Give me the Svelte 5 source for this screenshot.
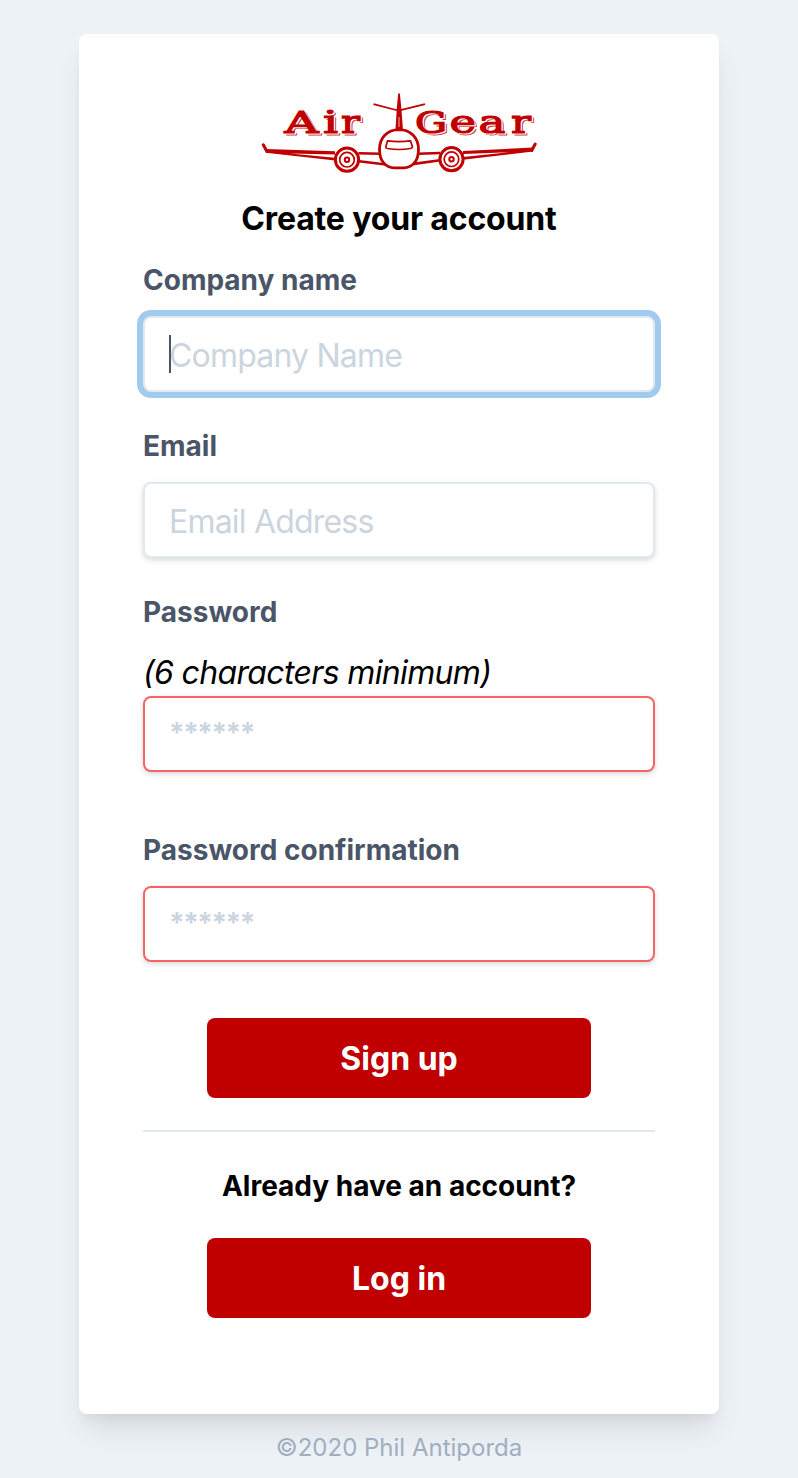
<script>
  let company = $state('');
  let email = $state('');
  let password = $state('');
  let confirmation = $state('');

  const letters = [
    { char: 'A', x: 284.5, width: 34, size: 30.5 },
    { char: 'i', x: 323, width: 15, size: 32.5 },
    { char: 'r', x: 341, width: 19, size: 32.5 },
    { char: 'G', x: 415, width: 32, size: 30.5 },
    { char: 'e', x: 449.5, width: 26.5, size: 32.5 },
    { char: 'a', x: 478.5, width: 27, size: 32.5 },
    { char: 'r', x: 511, width: 20, size: 32.5 }
  ];
  const layers = [
    { name: 'echo', dx: 2.4, dy: 2 },
    { name: 'gap', dx: 1.2, dy: 0.9 },
    { name: 'face', dx: 0, dy: 0 }
  ];
</script>

<main class="page">
  <form class="card" onsubmit={(e) => e.preventDefault()}>
    <svg class="logo" viewBox="259 88 280 90" width="280" height="90" role="img" aria-label="Air Gear">
      {#each layers as layer}
        <g class="lettering {layer.name}">
          {#each letters as l}
            <text x={l.x + layer.dx} y={133.2 + layer.dy} font-size={l.size} textLength={l.width} lengthAdjust="spacingAndGlyphs">{l.char}</text>
          {/each}
        </g>
      {/each}
      <g class="plane">
        <path class="solid" d="M398.200 93.500h1.700l1.500 16 1.500 19.500h-7.400l1.200-19.500z" />
        <path d="M373.500 104.200l24.500 6.300M425 104.200l-24.500 6" stroke-width="1.800" />
        <path d="M399 117v10" stroke="#fff" stroke-width=".7" />
        <path d="M263.300 144.800l3.600 6.700M535.200 144l-3.400 6.500" stroke-width="3" stroke-linecap="round" />
        <path class="solid" d="M266 149l69 2.200v3.200l-45-1 45 4.400v2.800l-69-7.800zM533 147.600l-70 3.400v3.100l46-1.800-46 4.700v2.800l70-8.300z" />
        <path d="M358.500 153.200l22 .6M359 161.300l27 3.200M440 153l-22 .8M440 160.300l-26 3.600" stroke-width="2.600" />
        <path d="M399 129.600c-12 0-19.500 8.300-19.500 19.800 0 11.500 6.200 18.500 14.800 18.500h9.400c8.600 0 14.800-7 14.800-18.500 0-11.500-7.500-19.800-19.500-19.800z" fill="#fff" stroke-width="2.800" />
        <path d="M387.500 140.900q11.500 1.500 23 0l2 6q-.2 1.300-2 1.600-11.500 2-23 0-1.700-.5-1.700-1.600z" stroke-width="1.700" />
        <circle cx="347" cy="159.700" r="11.600" fill="#fff" stroke-width="3" />
        <circle cx="347" cy="159.700" r="7.300" stroke-width="1.700" />
        <circle cx="347" cy="159.700" r="2.200" stroke-width="2" />
        <circle cx="451.500" cy="159.200" r="11.600" fill="#fff" stroke-width="3" />
        <circle cx="451.500" cy="159.200" r="7.300" stroke-width="1.700" />
        <circle cx="451.500" cy="159.200" r="2.200" stroke-width="2" />
      </g>
    </svg>

    <h1>Create your account</h1>

    <div class="field">
      <label for="company">Company name</label>
      <div class="control">
        <input id="company" class="focused" type="text" placeholder="Company Name" bind:value={company} />
        <span class="caret"></span>
      </div>
    </div>

    <div class="field">
      <label for="email">Email</label>
      <input id="email" type="email" placeholder="Email Address" bind:value={email} />
    </div>

    <div class="field password">
      <label for="password">Password</label>
      <em>(6 characters minimum)</em>
      <input id="password" class="invalid" type="password" placeholder="******" bind:value={password} />
    </div>

    <div class="field last">
      <label for="confirmation">Password confirmation</label>
      <input id="confirmation" class="invalid" type="password" placeholder="******" bind:value={confirmation} />
    </div>

    <button type="submit">Sign up</button>
    <hr />
    <p class="prompt">Already have an account?</p>
    <button type="button">Log in</button>
  </form>
  <footer>©2020 Phil Antiporda</footer>
</main>

<style>
  :global(body) {
    background: #edf2f7;
  }
  .page {
    box-sizing: border-box;
    height: 1478px;
    padding-top: 34px;
    display: flex;
    flex-direction: column;
    align-items: center;
    overflow: hidden;
    background: #edf2f7;
    font-family: Inter, "Liberation Sans", sans-serif;
    color: #000;
  }
  .card {
    box-sizing: border-box;
    width: 640px;
    height: 1380px;
    flex: none;
    padding: 54px 64px 0;
    display: flex;
    flex-direction: column;
    background: #fff;
    border-radius: 8px;
    box-shadow: 0 20px 30px -6px rgba(0, 0, 0, 0.1), 0 8px 12px -4px rgba(0, 0, 0, 0.05);
  }
  .logo {
    display: block;
    align-self: center;
    flex: none;
  }
  .lettering {
    font-family: "DejaVu Serif", serif;
  }
  .echo {
    fill: #c00000;
    stroke: #c00000;
    stroke-width: 0.8;
    opacity: 0.8;
  }
  .gap {
    fill: #fff;
    stroke: #fff;
    stroke-width: 1.2;
  }
  .face {
    fill: #c00000;
    stroke: #c00000;
    stroke-width: 1.2;
  }
  .plane {
    fill: none;
    stroke: #c00000;
  }
  .plane .solid {
    fill: #c00000;
    stroke: none;
  }
  h1 {
    margin: 21px 0 0;
    font-size: 32px;
    line-height: 40px;
    font-weight: 700;
    text-align: center;
    letter-spacing: -0.15px;
  }
  .field {
    display: flex;
    flex-direction: column;
    margin-bottom: 33px;
  }
  h1 + .field {
    margin-top: 20px;
  }
  .field.password {
    margin-bottom: 57px;
  }
  .field.last {
    margin-bottom: 56px;
  }
  label {
    margin-bottom: 15px;
    font-size: 28px;
    line-height: 42px;
    font-weight: 700;
    color: #4a5568;
  }
  .control {
    position: relative;
    display: flex;
  }
  input {
    box-sizing: border-box;
    width: 100%;
    height: 76px;
    margin: 0;
    padding: 2px 24px 0;
    border: 2px solid #e2e8f0;
    border-radius: 8px;
    background: #fff;
    color: #4a5568;
    font-family: inherit;
    font-size: 32px;
    letter-spacing: -0.8px;
    outline: none;
    box-shadow: 0 2px 6px rgba(0, 0, 0, 0.1), 0 2px 4px rgba(0, 0, 0, 0.06);
  }
  input::placeholder {
    color: #cbd5e0;
    opacity: 1;
  }
  .focused {
    box-shadow: 0 0 0 6px #a0cbef;
  }
  .caret {
    position: absolute;
    left: 26px;
    top: 19px;
    width: 2px;
    height: 38px;
    background: #4a5568;
  }
  em {
    padding: 3px 0 1px;
    font-size: 32px;
    line-height: 44px;
    letter-spacing: -0.65px;
  }
  .invalid {
    padding-top: 0;
    padding-bottom: 3px;
    border-color: #f56565;
    font-size: 28px;
    font-weight: 700;
    letter-spacing: -1.5px;
  }
  button {
    align-self: center;
    flex: none;
    box-sizing: border-box;
    width: 384px;
    height: 80px;
    padding: 2px 0 0;
    border: 0;
    border-radius: 8px;
    background: #c00000;
    color: #fff;
    font: 700 32px/78px Inter, "Liberation Sans", sans-serif;
  }
  hr {
    flex: none;
    width: 100%;
    height: 2px;
    margin: 32px 0;
    border: 0;
    background: #e2e8f0;
  }
  .prompt {
    margin: 0 0 31px;
    padding-top: 1px;
    font-size: 28px;
    line-height: 42px;
    font-weight: 700;
    text-align: center;
  }
  footer {
    margin-top: 16px;
    font-size: 24px;
    line-height: 36px;
    color: #a0aec0;
  }
</style>
